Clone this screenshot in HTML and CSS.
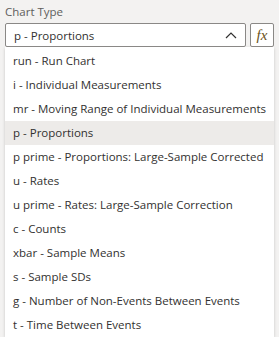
FILE: index.html
```html
<!DOCTYPE html>
<html>

<head>
    <meta name="viewport" content="width=device-width, initial-scale=1">
    <link rel="stylesheet" href="styles.css">
</head>

<body>
    <div class="field">
        <label class="fieldLabel">Chart Type</label>
        <div class="pickerRow">
            <div class="picker">
                <span class="pickerValue">p - Proportions</span>
                <svg class="chevron" width="12" height="8" viewBox="0 0 12 8">
                    <path d="M1 7 L6 2 L11 7" fill="none" stroke="#323130" stroke-width="1.2"/>
                </svg>
            </div>
            <button class="fxBtn"><i>fx</i></button>
        </div>
        <ul class="options">
            <li>run - Run Chart</li>
            <li>i - Individual Measurements</li>
            <li>mr - Moving Range of Individual Measurements</li>
            <li class="selected">p - Proportions</li>
            <li>p prime - Proportions: Large-Sample Corrected</li>
            <li>u - Rates</li>
            <li>u prime - Rates: Large-Sample Correction</li>
            <li>c - Counts</li>
            <li>xbar - Sample Means</li>
            <li>s - Sample SDs</li>
            <li>g - Number of Non-Events Between Events</li>
            <li>t - Time Between Events</li>
        </ul>
    </div>
</body>

</html>
```

FILE: styles.css
```css
body {
    margin: 0;
    background: #f3f2f1;
    font-family: "Open Sans", "Noto Sans", sans-serif;
    color: #323130;
}

* {
    box-sizing: border-box;
}

.field {
    padding: 3px 5px 0 5px;
}

.fieldLabel {
    display: block;
    font-size: 11.5px;
    color: #605e5c;
    height: 20px;
    line-height: 17px;
}

/* select box and fx button */

.pickerRow {
    display: flex;
    gap: 4px;
    height: 24px;
}

.picker {
    flex: 1;
    display: flex;
    align-items: center;
    justify-content: space-between;
    background: #fff;
    border: 1px solid #8a8886;
    border-radius: 2px;
    padding: 0 8px 0 8px;
    font-size: 11.5px;
}

.fxBtn {
    width: 24px;
    height: 24px;
    padding: 0;
    border: 1px solid #8a8886;
    border-radius: 2px;
    background: #fff;
    font-family: "Liberation Serif", serif;
    font-size: 15px;
    color: #6b5220;
}

/* dropdown list */

.options {
    list-style: none;
    margin: 0;
    padding: 2px 0 0 0;
    background: #fff;
    box-shadow: 0 1px 3px rgba(0, 0, 0, 0.18);
}

.options li {
    height: 24px;
    line-height: 24px;
    padding: 0 8px;
    font-size: 11.5px;
    white-space: nowrap;
}

.options li.selected {
    background: #edebe9;
}
```
